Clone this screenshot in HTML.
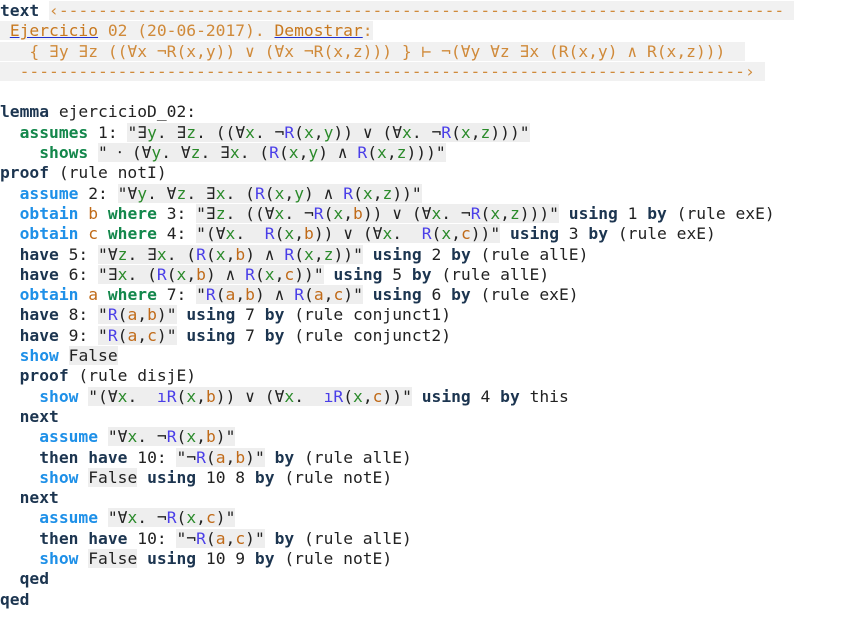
<!DOCTYPE html>
<html><head><meta charset="utf-8"><style>
body{margin:0;background:#fff;width:848px;height:626px;overflow:hidden}
#c{position:absolute;left:0;top:1px;font-family:"DejaVu Sans Mono","Liberation Mono",monospace;font-size:16.3px;line-height:20.3px;color:#222}
.l{height:20.3px;white-space:pre}
.k{color:#1c3550;font-weight:bold}
.b{color:#1e90e8;font-weight:bold}
.g{color:#13874b;font-weight:bold}
.s{background:#eeeeee}
.cm{background:#f1f1f1;color:#d08a3a}
.u{color:#c8781e;text-decoration:underline;text-decoration-color:#2030d0}
.R{color:#4a3ee8}
.v{color:#2a8a2a}
.f{color:#c06a18}
</style></head><body><div id="c">
<div class="l"><span class="k">text</span> <span class="cm">‹-------------------------------------------------------------------------- </span></div>
<div class="l"><span class="cm"> <span class="u">Ejercicio</span> 02 (20-06-2017). <span class="u">Demostrar</span>:</span></div>
<div class="l"><span class="cm">   { ∃y ∃z ((∀x ¬R(x,y)) ∨ (∀x ¬R(x,z))) } ⊢ ¬(∀y ∀z ∃x (R(x,y) ∧ R(x,z)))  </span></div>
<div class="l"><span class="cm">  --------------------------------------------------------------------------› </span></div>
<div class="l"> </div>
<div class="l"><span class="k">lemma</span> ejercicioD_02:</div>
<div class="l">  <span class="g">assumes</span> 1: <span class="s">"∃<span class="v">y</span>. ∃<span class="v">z</span>. ((∀<span class="v">x</span>. ¬<span class="R">R</span>(<span class="v">x</span>,<span class="v">y</span>)) ∨ (∀<span class="v">x</span>. ¬<span class="R">R</span>(<span class="v">x</span>,<span class="v">z</span>)))"</span></div>
<div class="l">    <span class="g">shows</span> <span class="s">" ⸱ (∀<span class="v">y</span>. ∀<span class="v">z</span>. ∃<span class="v">x</span>. (<span class="R">R</span>(<span class="v">x</span>,<span class="v">y</span>) ∧ <span class="R">R</span>(<span class="v">x</span>,<span class="v">z</span>)))"</span></div>
<div class="l"><span class="k">proof</span> (rule notI)</div>
<div class="l">  <span class="b">assume</span> 2: <span class="s">"∀<span class="v">y</span>. ∀<span class="v">z</span>. ∃<span class="v">x</span>. (<span class="R">R</span>(<span class="v">x</span>,<span class="v">y</span>) ∧ <span class="R">R</span>(<span class="v">x</span>,<span class="v">z</span>))"</span></div>
<div class="l">  <span class="b">obtain</span> <span class="f">b</span> <span class="g">where</span> 3: <span class="s">"∃<span class="v">z</span>. ((∀<span class="v">x</span>. ¬<span class="R">R</span>(<span class="v">x</span>,<span class="f">b</span>)) ∨ (∀<span class="v">x</span>. ¬<span class="R">R</span>(<span class="v">x</span>,<span class="v">z</span>)))"</span> <span class="k">using</span> 1 <span class="k">by</span> (rule exE)</div>
<div class="l">  <span class="b">obtain</span> <span class="f">c</span> <span class="g">where</span> 4: <span class="s">"(∀<span class="v">x</span>.  <span class="R">R</span>(<span class="v">x</span>,<span class="f">b</span>)) ∨ (∀<span class="v">x</span>.  <span class="R">R</span>(<span class="v">x</span>,<span class="f">c</span>))"</span> <span class="k">using</span> 3 <span class="k">by</span> (rule exE)</div>
<div class="l">  <span class="k">have</span> 5: <span class="s">"∀<span class="v">z</span>. ∃<span class="v">x</span>. (<span class="R">R</span>(<span class="v">x</span>,<span class="f">b</span>) ∧ <span class="R">R</span>(<span class="v">x</span>,<span class="v">z</span>))"</span> <span class="k">using</span> 2 <span class="k">by</span> (rule allE)</div>
<div class="l">  <span class="k">have</span> 6: <span class="s">"∃<span class="v">x</span>. (<span class="R">R</span>(<span class="v">x</span>,<span class="f">b</span>) ∧ <span class="R">R</span>(<span class="v">x</span>,<span class="f">c</span>))"</span> <span class="k">using</span> 5 <span class="k">by</span> (rule allE)</div>
<div class="l">  <span class="b">obtain</span> <span class="f">a</span> <span class="g">where</span> 7: <span class="s">"<span class="R">R</span>(<span class="f">a</span>,<span class="f">b</span>) ∧ <span class="R">R</span>(<span class="f">a</span>,<span class="f">c</span>)"</span> <span class="k">using</span> 6 <span class="k">by</span> (rule exE)</div>
<div class="l">  <span class="k">have</span> 8: <span class="s">"<span class="R">R</span>(<span class="f">a</span>,<span class="f">b</span>)"</span> <span class="k">using</span> 7 <span class="k">by</span> (rule conjunct1)</div>
<div class="l">  <span class="k">have</span> 9: <span class="s">"<span class="R">R</span>(<span class="f">a</span>,<span class="f">c</span>)"</span> <span class="k">using</span> 7 <span class="k">by</span> (rule conjunct2)</div>
<div class="l">  <span class="b">show</span> <span class="s">False</span></div>
<div class="l">  <span class="k">proof</span> (rule disjE)</div>
<div class="l">    <span class="b">show</span> <span class="s">"(∀<span class="v">x</span>.  <span class="R">ıR</span>(<span class="v">x</span>,<span class="f">b</span>)) ∨ (∀<span class="v">x</span>.  <span class="R">ıR</span>(<span class="v">x</span>,<span class="f">c</span>))"</span> <span class="k">using</span> 4 <span class="k">by</span> this</div>
<div class="l">  <span class="k">next</span></div>
<div class="l">    <span class="b">assume</span> <span class="s">"∀<span class="v">x</span>. ¬<span class="R">R</span>(<span class="v">x</span>,<span class="f">b</span>)"</span></div>
<div class="l">    <span class="k">then</span> <span class="k">have</span> 10: <span class="s">"¬<span class="R">R</span>(<span class="f">a</span>,<span class="f">b</span>)"</span> <span class="k">by</span> (rule allE)</div>
<div class="l">    <span class="b">show</span> <span class="s">False</span> <span class="k">using</span> 10 8 <span class="k">by</span> (rule notE)</div>
<div class="l">  <span class="k">next</span></div>
<div class="l">    <span class="b">assume</span> <span class="s">"∀<span class="v">x</span>. ¬<span class="R">R</span>(<span class="v">x</span>,<span class="f">c</span>)"</span></div>
<div class="l">    <span class="k">then</span> <span class="k">have</span> 10: <span class="s">"¬<span class="R">R</span>(<span class="f">a</span>,<span class="f">c</span>)"</span> <span class="k">by</span> (rule allE)</div>
<div class="l">    <span class="b">show</span> <span class="s">False</span> <span class="k">using</span> 10 9 <span class="k">by</span> (rule notE)</div>
<div class="l">  <span class="k">qed</span></div>
<div class="l"><span class="k">qed</span></div>
</div></body></html>
